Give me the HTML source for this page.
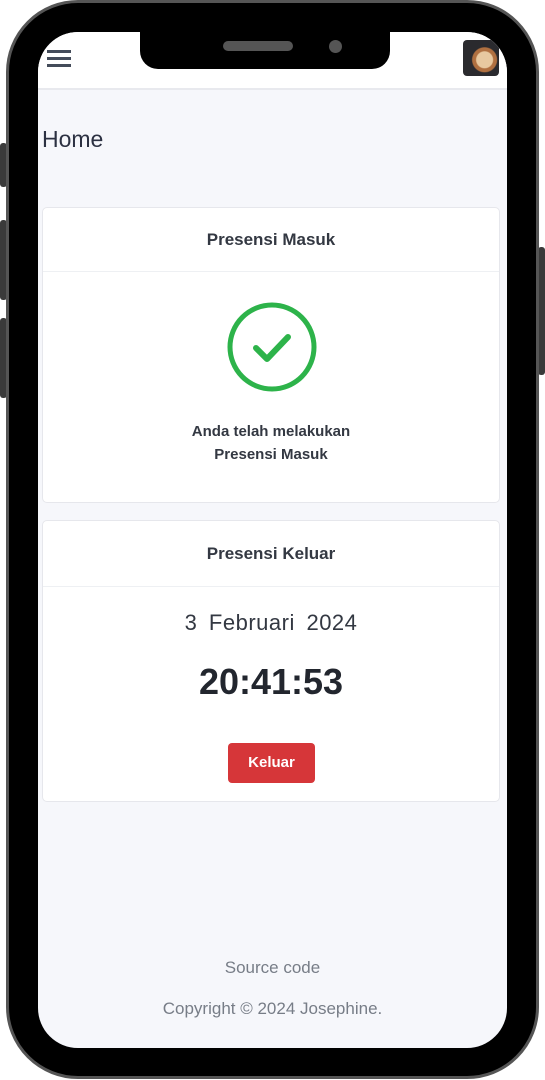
<!DOCTYPE html>
<html><head><style>
*{margin:0;padding:0;box-sizing:border-box}
body{width:545px;height:1080px;background:#fff;position:relative;overflow:hidden;font-family:"Liberation Sans",sans-serif}
.frame{position:absolute;left:6px;top:0;width:533px;height:1079px;border-radius:72px;background:#000;border:3px solid #555}
.btn{position:absolute;background:#3a3a3a;border-radius:3px}
.screen{position:absolute;left:38px;top:32px;width:469px;height:1016px;border-radius:40px;background:#f6f7fb;overflow:hidden}
.hdr{position:absolute;left:0;top:0;width:469px;height:58px;background:#fff;border-bottom:2px solid #e8e9ee}
.notch{position:absolute;left:140px;top:32px;width:250px;height:37px;background:#000;border-radius:0 0 18px 18px}
.card{position:absolute;left:4px;width:458px;background:#fff;border:1px solid #e6e7ec;border-radius:5px}
.ch{height:64px;border-bottom:1px solid #eef0f3;text-align:center;line-height:64px;font-weight:bold;font-size:17px;color:#333842}
</style></head><body>
<div class="btn" style="left:0;top:143px;width:7px;height:44px"></div>
<div class="btn" style="left:0;top:220px;width:7px;height:80px"></div>
<div class="btn" style="left:0;top:318px;width:7px;height:80px"></div>
<div class="btn" style="left:538px;top:247px;width:7px;height:128px"></div>
<div class="frame"></div>
<div class="screen">
 <div class="hdr">
  <div style="position:absolute;left:9px;top:18px;width:24px;height:3px;background:#444c5a;box-shadow:0 7px 0 #444c5a,0 14px 0 #444c5a"></div>
  <div style="position:absolute;left:425px;top:8px;width:36px;height:36px;border-radius:4px;background:radial-gradient(circle at 60% 55%,#e8c9a0 0 8px,#b07040 9px 12px,#2a2a2e 13px)"></div>
 </div>
 <div style="position:absolute;left:4px;top:94px;font-size:23px;color:#2c3142">Home</div>
 <div class="card" style="top:175px;height:296px">
  <div class="ch">Presensi Masuk</div>
  <svg style="position:absolute;left:183px;top:93px" width="92" height="92" viewBox="0 0 92 92"><circle cx="46" cy="46" r="42" fill="none" stroke="#2db34a" stroke-width="5"/><path d="M30 47 L41 58 L62 36" fill="none" stroke="#2db34a" stroke-width="6" stroke-linecap="round" stroke-linejoin="round"/></svg>
  <div style="position:absolute;top:212px;width:100%;text-align:center;font-size:15px;font-weight:bold;color:#333842;line-height:23px">Anda telah melakukan<br>Presensi Masuk</div>
 </div>
 <div class="card" style="top:488px;height:282px">
  <div class="ch" style="height:66px;line-height:66px">Presensi Keluar</div>
  <div style="position:absolute;top:89px;width:100%;text-align:center;font-size:22px;color:#333842;word-spacing:5px;letter-spacing:0.5px">3 Februari 2024</div>
  <div style="position:absolute;top:140px;width:100%;text-align:center;font-size:36px;font-weight:bold;color:#22262e">20:41:53</div>
  <div style="position:absolute;left:185px;top:222px;width:87px;height:40px;background:#d63639;border-radius:4px;color:#fff;font-weight:bold;font-size:15px;text-align:center;line-height:40px">Keluar</div>
 </div>
 <div style="position:absolute;top:926px;width:100%;text-align:center;font-size:17px;color:#777d87">Source code</div>
 <div style="position:absolute;top:967px;width:100%;text-align:center;font-size:17px;color:#777d87">Copyright © 2024 Josephine.</div>
</div>
<div class="notch"></div>
<div style="position:absolute;left:223px;top:41px;width:70px;height:10px;border-radius:5px;background:#555"></div>
<div style="position:absolute;left:329px;top:40px;width:13px;height:13px;border-radius:50%;background:#555"></div>
</body></html>
